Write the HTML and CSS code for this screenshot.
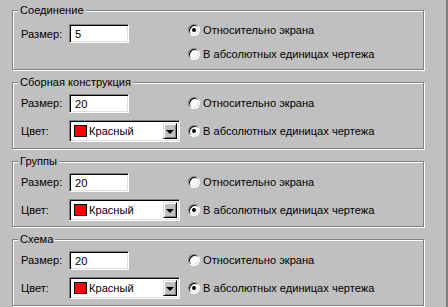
FILE: index.html
```html
<!DOCTYPE html>
<html lang="ru">
<head>
<meta charset="utf-8">
<title>Настройки</title>
<link rel="stylesheet" href="styles.css">
</head>
<body>
<div class="panel">
  <section class="group g1">
    <div class="title">Соединение</div>
    <div class="grid">
      <span class="label lbl-first">Размер:</span>
      <span class="field lbl-first">5</span>
      <label class="radio"><span class="dot on"></span>Относительно экрана</label>
      <label class="radio"><span class="dot"></span>В абсолютных единицах чертежа</label>
    </div>
  </section>

  <section class="group g2">
    <div class="title">Сборная конструкция</div>
    <div class="grid">
      <span class="label">Размер:</span>
      <span class="field">20</span>
      <label class="radio"><span class="dot"></span>Относительно экрана</label>
      <span class="label">Цвет:</span>
      <span class="combo"><span class="swatch"></span><span class="ctext">Красный</span><span class="btn"><span class="arrow"></span></span></span>
      <label class="radio"><span class="dot on"></span>В абсолютных единицах чертежа</label>
    </div>
  </section>

  <section class="group g3">
    <div class="title">Группы</div>
    <div class="grid">
      <span class="label">Размер:</span>
      <span class="field">20</span>
      <label class="radio"><span class="dot"></span>Относительно экрана</label>
      <span class="label">Цвет:</span>
      <span class="combo"><span class="swatch"></span><span class="ctext">Красный</span><span class="btn"><span class="arrow"></span></span></span>
      <label class="radio"><span class="dot on"></span>В абсолютных единицах чертежа</label>
    </div>
  </section>

  <section class="group g4">
    <div class="title">Схема</div>
    <div class="grid">
      <span class="label">Размер:</span>
      <span class="field">20</span>
      <label class="radio"><span class="dot"></span>Относительно экрана</label>
      <span class="label">Цвет:</span>
      <span class="combo"><span class="swatch"></span><span class="ctext">Красный</span><span class="btn"><span class="arrow"></span></span></span>
      <label class="radio"><span class="dot on"></span>В абсолютных единицах чертежа</label>
    </div>
  </section>
</div>
</body>
</html>
```

FILE: styles.css
```css
html, body {
  margin: 0;
  padding: 0;
  background: #c0c0c0;
}
body {
  width: 448px;
  height: 307px;
  overflow: hidden;
  font-family: "Liberation Sans", Arial, sans-serif;
  font-size: 11.1px;
  color: #000;
}
.panel {
  box-sizing: border-box;
  width: 448px;
  height: 307px;
  border-right: 2px solid #808080;
  padding: 10px 0 0 12px;
  display: flex;
  flex-direction: column;
  gap: 12px;
}
.group {
  position: relative;
  box-sizing: border-box;
  width: 412px;
  border: 1px solid #808080;
  box-shadow: inset 1px 1px 0 #fff, 1px 1px 0 #fff;
  padding: 0 0 0 8px;
}
.g1 { height: 60px; }
.g2 { height: 67px; }
.g3 { height: 66px; }
.g4 { height: 67px; }
.title {
  position: absolute;
  top: -8px;
  left: 5px;
  padding: 0 2px;
  background: #c0c0c0;
  line-height: 14px;
}
.grid {
  display: grid;
  grid-template-columns: 48px 119px auto;
  align-items: center;
}
.g1 .grid {
  grid-template-rows: 24px 24px;
  padding-top: 7px;
}
.g1 .radio:nth-of-type(1) { grid-column: 3; grid-row: 1; }
.g1 .radio:nth-of-type(2) { grid-column: 3; grid-row: 2; }
.g1 .lbl-first { grid-row: 1 / span 2; align-self: start; margin-top: 6px; }
.g1 .label.lbl-first { margin-top: 9px; }
.g2 .grid, .g3 .grid, .g4 .grid {
  grid-template-rows: 28px 28px;
  padding-top: 6px;
}
.label {
  line-height: 14px;
}
.field {
  box-sizing: border-box;
  width: 60px;
  height: 19px;
  background: #fff;
  border: 1px solid;
  border-color: #808080 #fff #fff #808080;
  box-shadow: inset 1px 1px 0 #000, inset -1px -1px 0 #dfdfdf;
  padding: 2px 0 0 5px;
  line-height: 14px;
}
.combo {
  box-sizing: border-box;
  width: 111px;
  height: 22px;
  background: #fff;
  border: 1px solid;
  border-color: #808080 #fff #fff #808080;
  box-shadow: inset 1px 1px 0 #000, inset -1px -1px 0 #dfdfdf;
  display: flex;
  align-items: center;
  padding: 2px 2px 2px 4px;
}
.swatch {
  box-sizing: border-box;
  width: 13px;
  height: 12px;
  background: #f00;
  border: 1px solid #000;
  flex: none;
}
.ctext {
  flex: 1;
  padding-left: 2px;
  line-height: 14px;
}
.btn {
  box-sizing: border-box;
  width: 14px;
  height: 16px;
  background: #c0c0c0;
  border: 1px solid;
  border-color: #dfdfdf #000 #000 #dfdfdf;
  box-shadow: inset 1px 1px 0 #fff, inset -1px -1px 0 #808080;
  display: flex;
  align-items: center;
  justify-content: center;
  flex: none;
}
.arrow {
  width: 0;
  height: 0;
  border-left: 4px solid transparent;
  border-right: 4px solid transparent;
  border-top: 4px solid #000;
  margin-top: 1px;
}
.radio {
  display: flex;
  align-items: center;
  gap: 3px;
  line-height: 14px;
}
.dot {
  box-sizing: border-box;
  position: relative;
  width: 12px;
  height: 12px;
  border-radius: 50%;
  background: #fff;
  border: 1px solid;
  border-color: #808080 #fff #fff #808080;
  box-shadow: inset 1px 1px 0 #000, inset -1px -1px 0 #dfdfdf;
  flex: none;
}
.dot.on::after {
  content: "";
  position: absolute;
  left: 3px;
  top: 3px;
  width: 4px;
  height: 4px;
  border-radius: 50%;
  background: #000;
}
```
